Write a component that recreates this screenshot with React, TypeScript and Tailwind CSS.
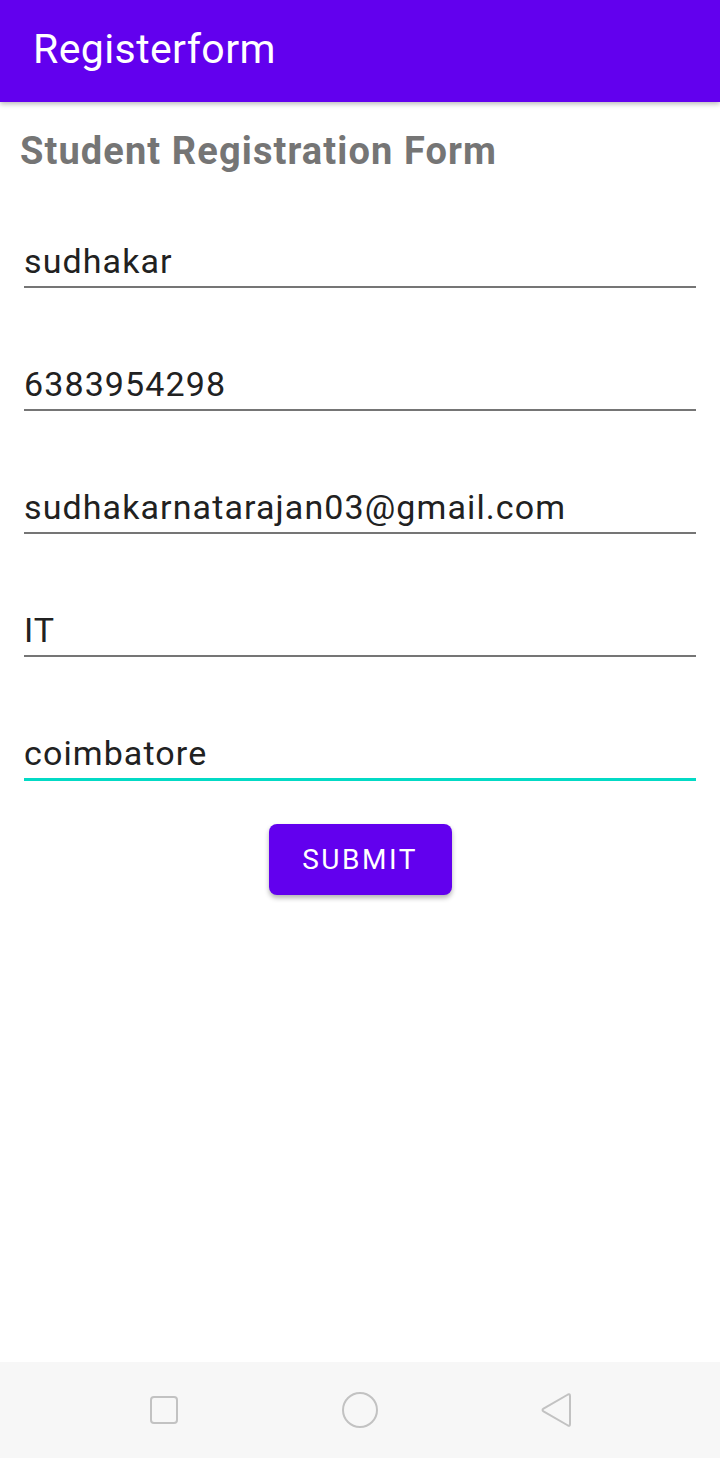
import React from "react";

const fields = [
  "sudhakar",
  "6383954298",
  "sudhakarnatarajan03@gmail.com",
  "IT",
];

function Field({ value, focused }: { value: string; focused?: boolean }) {
  return (
    <div
      className={
        focused
          ? "mx-[24px] pb-[6px] border-b-[3px] border-[#03dac5]"
          : "mx-[24px] pb-[6px] border-b-2 border-[#757575]"
      }
    >
      <div className="text-[34px] leading-[38px] tracking-[1.1px] text-[#212121]">{value}</div>
    </div>
  );
}

function NavBar() {
  return (
    <div className="h-[96px] bg-[#f7f7f7] flex items-center justify-center">
      <div className="w-[430px] flex items-center justify-between">
        <svg width="38" height="38" viewBox="0 0 38 38">
          <rect x="6" y="6" width="26" height="26" rx="3" fill="none" stroke="#c2c2c2" strokeWidth="2" />
        </svg>
        <svg width="38" height="38" viewBox="0 0 38 38">
          <circle cx="19" cy="19" r="17" fill="none" stroke="#c2c2c2" strokeWidth="2" />
        </svg>
        <svg width="38" height="38" viewBox="0 0 38 38">
          <path
            d="M31 3.5 Q33 2.5 33 5 L33 33 Q33 35.5 31 34.5 L6.5 20.3 Q4.5 19 6.5 17.7 Z"
            fill="none"
            stroke="#c2c2c2"
            strokeWidth="2"
            strokeLinejoin="round"
          />
        </svg>
      </div>
    </div>
  );
}

export default function App() {
  return (
    <div className="w-[720px] h-[1458px] flex flex-col bg-white font-['Roboto',sans-serif]">
      <header className="relative z-10 h-[102px] bg-[#6200ee] shadow-[0_2px_5px_rgba(0,0,0,0.28)] pl-[33px] pt-[26px]">
        <h1 className="text-[41px] leading-[47px] tracking-[0.4px] text-white">Registerform</h1>
      </header>

      <main className="flex-1 flex flex-col">
        <h2 className="mt-[28px] ml-[20px] text-[38px] leading-[42px] tracking-[1.1px] font-bold text-[#757575]">
          Student Registration Form
        </h2>

        <div className="mt-[70px] flex flex-col gap-[77px]">
          {fields.map((f) => (
            <Field key={f} value={f} />
          ))}
          <Field value="coimbatore" focused />
        </div>

        <div className="mt-[43px] flex justify-center">
          <button className="w-[183px] h-[71px] rounded-[8px] bg-[#6200ee] text-white text-[28px] tracking-[0.09em] shadow-[0_3px_5px_rgba(0,0,0,0.3)]">
            SUBMIT
          </button>
        </div>
      </main>

      <NavBar />
    </div>
  );
}
